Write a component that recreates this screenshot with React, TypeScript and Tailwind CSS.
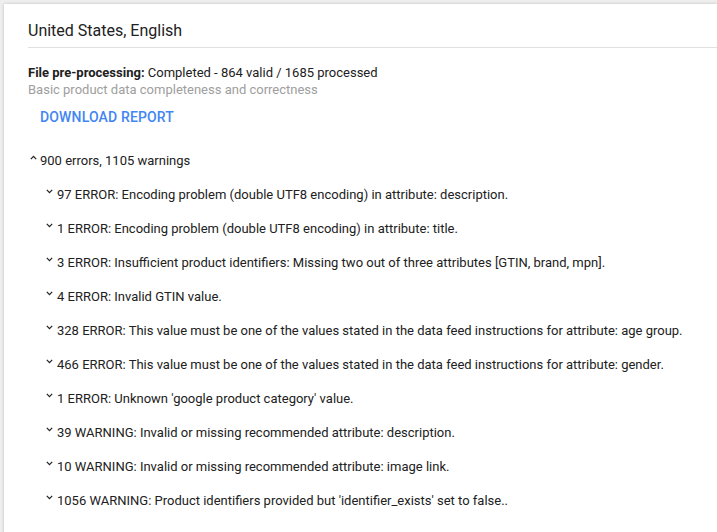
import React from "react";

const items = [
  "97 ERROR: Encoding problem (double UTF8 encoding) in attribute: description.",
  "1 ERROR: Encoding problem (double UTF8 encoding) in attribute: title.",
  "3 ERROR: Insufficient product identifiers: Missing two out of three attributes [GTIN, brand, mpn].",
  "4 ERROR: Invalid GTIN value.",
  "328 ERROR: This value must be one of the values stated in the data feed instructions for attribute: age group.",
  "466 ERROR: This value must be one of the values stated in the data feed instructions for attribute: gender.",
  "1 ERROR: Unknown 'google product category' value.",
  "39 WARNING: Invalid or missing recommended attribute: description.",
  "10 WARNING: Invalid or missing recommended attribute: image link.",
  "1056 WARNING: Product identifiers provided but 'identifier_exists' set to false..",
];

function Caret({ up }: { up?: boolean }) {
  return (
    <svg width="7" height="5" viewBox="0 0 7 5" className="shrink-0" fill="none">
      {up ? (
        <path d="M0.8 4.2 L3.5 1.3 L6.2 4.2" stroke="#212121" strokeWidth="1.2" />
      ) : (
        <path d="M0.8 0.8 L3.5 3.7 L6.2 0.8" stroke="#212121" strokeWidth="1.2" />
      )}
    </svg>
  );
}

export default function App() {
  return (
    <div
      className="h-[532px] w-[717px] overflow-hidden bg-[#eeeeee] pl-[4px] pt-[4px]"
      style={{ fontFamily: "Roboto, 'Liberation Sans', sans-serif" }}
    >
      <div className="h-[600px] bg-white pl-[24px] shadow-[0_0_3px_rgba(0,0,0,0.2)] text-[#212121]">
        <div className="flex h-[44px] items-center border-b border-[#e0e0e0] text-[16px] pt-[11px]">
          United States, English
        </div>
        <div className="pt-[16px] text-[13px] leading-[17px]">
          <div>
            <span className="font-bold">File pre-processing:</span> Completed - 864 valid / 1685 processed
          </div>
          <div className="text-[#9e9e9e]">Basic product data completeness and correctness</div>
        </div>
        <div className="mt-[11px] pl-[12px] text-[14px] font-medium leading-[17px] tracking-[0.15px] text-[#4285f4]">
          DOWNLOAD REPORT
        </div>
        <div className="mt-[26px] flex items-center gap-[3px] pl-[2px] text-[13px] leading-[17px]">
          <div className="-mt-[6px]"><Caret up /></div>
          <span>900 errors, 1105 warnings</span>
        </div>
        <div className="flex flex-col gap-[17px] pt-[17px] pl-[18px] text-[13px] leading-[17px]">
          {items.map((t, i) => (
            <div key={i} className="flex items-center gap-[4px]">
              <div className="-mt-[6px]"><Caret /></div>
              <span>{t}</span>
            </div>
          ))}
        </div>
      </div>
    </div>
  );
}
